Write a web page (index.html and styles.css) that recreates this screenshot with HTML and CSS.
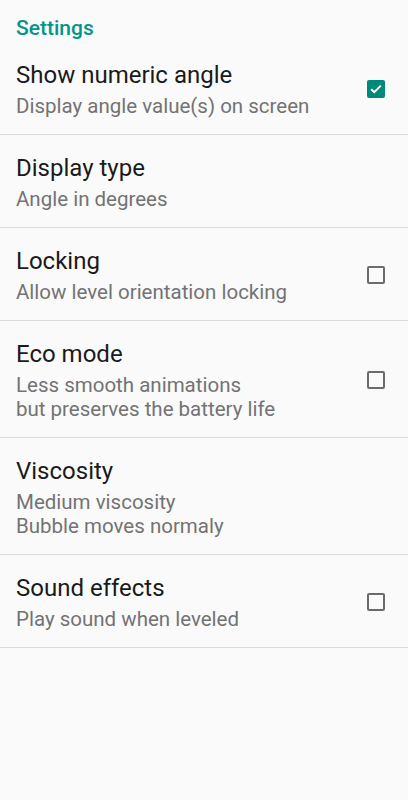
FILE: index.html
```html
<!DOCTYPE html>
<html lang="en">
<head>
    <meta charset="UTF-8">
    <meta name="viewport" content="width=device-width, initial-scale=1.0">
    <title>Settings</title>
    <link rel="stylesheet" href="styles.css">
</head>
<body>

    <header class="category">Settings</header>

    <main class="prefs">
        <div class="pref">
            <div class="pref-text">
                <div class="pref-title">Show numeric angle</div>
                <div class="pref-summary">Display angle value(s) on screen</div>
            </div>
            <span class="check checked">
                <svg viewBox="0 0 18 18" width="18" height="18"><path d="M4.2 9.2l3.1 3 6.5-6.6" fill="none" stroke="#fff" stroke-width="2"/></svg>
            </span>
        </div>

        <div class="pref">
            <div class="pref-text">
                <div class="pref-title">Display type</div>
                <div class="pref-summary">Angle in degrees</div>
            </div>
        </div>

        <div class="pref">
            <div class="pref-text">
                <div class="pref-title">Locking</div>
                <div class="pref-summary">Allow level orientation locking</div>
            </div>
            <span class="check"></span>
        </div>

        <div class="pref">
            <div class="pref-text">
                <div class="pref-title">Eco mode</div>
                <div class="pref-summary">Less smooth animations<br>but preserves the battery life</div>
            </div>
            <span class="check"></span>
        </div>

        <div class="pref">
            <div class="pref-text">
                <div class="pref-title">Viscosity</div>
                <div class="pref-summary">Medium viscosity<br>Bubble moves normaly</div>
            </div>
        </div>

        <div class="pref">
            <div class="pref-text">
                <div class="pref-title">Sound effects</div>
                <div class="pref-summary">Play sound when leveled</div>
            </div>
            <span class="check"></span>
        </div>
    </main>

</body>
</html>
```

FILE: styles.css
```css
body {
    margin: 0;
    padding: 0;
    background-color: #fafafa;
    font-family: Roboto, "Noto Sans", sans-serif;
}

.category {
    padding: 16px 16px 2px;
    font-size: 21px;
    line-height: 24px;
    font-weight: 500;
    color: #009688;
}

.pref {
    display: flex;
    align-items: center;
    padding: 18px 23px 16px 16px;
    border-bottom: 1px solid #dcdcdc;
}

.pref-text {
    flex: 1;
}

.pref-title {
    font-size: 24px;
    line-height: 30px;
    color: #1a1a1a;
    margin-bottom: 4px;
}

.pref-summary {
    font-size: 20.5px;
    line-height: 24px;
    color: #737373;
}

.check {
    width: 18px;
    height: 18px;
    box-sizing: border-box;
    border: 2px solid #6b6b6b;
    border-radius: 2px;
}

.check.checked {
    border: none;
    background-color: #00897b;
}

.check svg {
    display: block;
}
```
